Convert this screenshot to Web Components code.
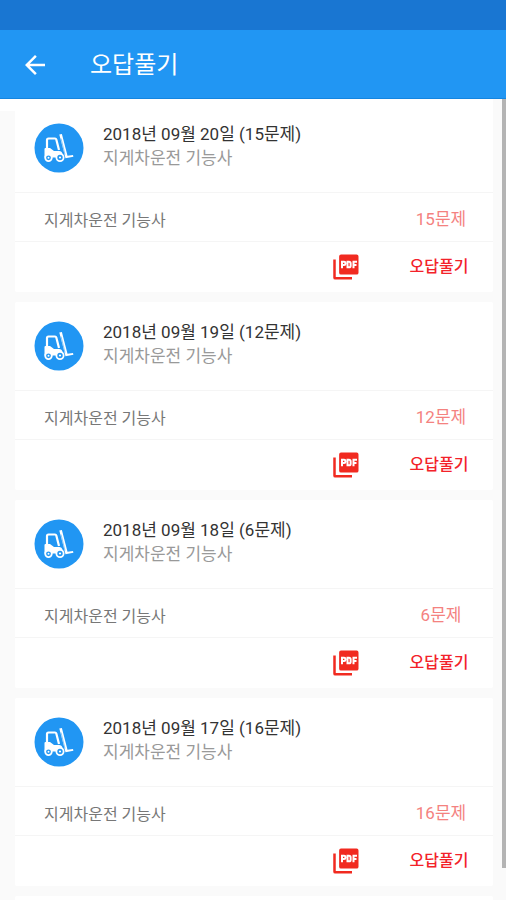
<!DOCTYPE html>
<html lang="ko">
<head>
<meta charset="utf-8">
<meta name="viewport" content="width=device-width, initial-scale=1">
<title>오답풀기</title>
<style>
html, body { height: 100%; margin: 0; }
body { font-family: Roboto, "Noto Sans CJK KR", sans-serif; background: #fafafa; overflow: hidden; }
</style>
</head>
<body>
<review-app></review-app>

<template id="app-tpl">
<style>
:host { display: flex; flex-direction: column; height: 100%; }
.list { flex: 1; min-height: 0; overflow: hidden; display: grid; grid-template-columns: 1fr 4px; }
main { display: flex; flex-direction: column; gap: 10px; padding: 5px 9px 0 15px; min-height: 0; overflow: hidden; background: linear-gradient(#fff, #fff) 0 0 / calc(100% - 9px) 12px no-repeat; }
.track { height: 100%; }
.thumb { height: 96%; background: #b4b4b4; }
</style>
<app-header>오답풀기</app-header>
<div class="list">
<main>
<review-card count="15"><span slot="date">2018년 09월 20일 (15문제)</span>지게차운전 기능사</review-card>
<review-card count="12"><span slot="date">2018년 09월 19일 (12문제)</span>지게차운전 기능사</review-card>
<review-card count="6"><span slot="date">2018년 09월 18일 (6문제)</span>지게차운전 기능사</review-card>
<review-card count="16"><span slot="date">2018년 09월 17일 (16문제)</span>지게차운전 기능사</review-card>
<blank-card></blank-card>
</main>
<div class="track"><div class="thumb"></div></div>
</div>
</template>

<template id="header-tpl">
<style>
:host { display: block; flex: none; color: #fff; }
.status { height: 30px; background: #1976d2; }
.bar { height: 69px; display: flex; align-items: center; gap: 40px; padding: 2px 0 0 20px; background: #2196f3; border-bottom: 1px solid #1485e0; box-sizing: border-box; }
button { display: flex; padding: 0; border: 0; background: none; color: inherit; }
h1 { margin: 0; font-size: 24px; line-height: 32px; font-weight: 400; }
</style>
<div class="status"></div>
<header class="bar">
<button type="button" aria-label="뒤로"><svg width="30" height="30" viewBox="0 0 24 24" fill="currentColor"><path d="M20 11H7.830l5.590-5.590L12 4l-8 8 8 8 1.410-1.410L7.830 13H20v-2z"/></svg></button>
<h1><slot></slot></h1>
</header>
</template>

<template id="card-tpl">
<style>
:host { display: block; flex: none; background: #fff; border-radius: 2px; }
.top { display: flex; align-items: center; gap: 19px; height: 88px; padding-left: 19px; }
.date { font-size: 17px; line-height: 24px; color: #333; }
.sub { font-size: 17px; line-height: 24px; color: #999; }
.text { padding-bottom: 4px; }
.row { display: flex; align-items: center; justify-content: space-between; height: 49px; padding: 0 12px 0 29px; border-top: 1px solid #f5f5f5; box-sizing: border-box; font-size: 16px; line-height: 24px; }
.name { color: #777; padding-top: 8px; }
.count { width: 80px; text-align: center; color: #f4827f; font-size: 17px; padding-top: 4px; }
.actions { justify-content: flex-end; gap: 38px; height: 51px; padding-right: 14px; }
button { display: flex; justify-content: center; padding: 0; border: 0; background: none; font: inherit; color: #f3222a; }
.solve { width: 80px; font-weight: 500; }
</style>
<div class="top">
<forklift-icon></forklift-icon>
<div class="text"><div class="date"><slot name="date"></slot></div><div class="sub"><slot></slot></div></div>
</div>
<div class="row"><span class="name">지게차운전 기능사</span><span class="count"></span></div>
<div class="row actions">
<button type="button" aria-label="PDF"><pdf-icon></pdf-icon></button>
<button type="button" class="solve">오답풀기</button>
</div>
</template>

<script>
const stamp = (el, html) => { el.attachShadow({ mode: 'open' }).innerHTML = html; };
const clone = (el, id) => el.attachShadow({ mode: 'open' }).append(document.getElementById(id).content.cloneNode(true));

customElements.define('forklift-icon', class extends HTMLElement {
  constructor() {
    super();
    stamp(this, `<style>:host { display: block; flex: none; } svg { display: block; }</style>
<svg width="50" height="50" viewBox="0 0 50 50" aria-hidden="true">
<circle cx="25" cy="25" r="24.5" fill="#2196f3"/>
<path d="M13 28V17q0-1.500 1.500-1.500H21q1 0 1.300 1L25 27" fill="none" stroke="#fff" stroke-width="2.200"/>
<path d="M10.500 26q0-1 1-1h4.500l4 3h5q3 0 3.500 3v3.500h-18z" fill="#fff"/>
<path d="M25.300 11.600l2.600-.6 5.600 21.800 5.500-.8.400 1.800-7.900 1.500z" fill="#fff"/>
<path d="M27 15.500l4 16" stroke="#2196f3" stroke-width=".5"/>
<g fill="#2196f3" stroke="#fff" stroke-width="1.800"><circle cx="14.500" cy="34.800" r="3.300"/><circle cx="26" cy="34.500" r="3.600"/></g>
<g fill="#fff"><circle cx="14.500" cy="34.800" r="1"/><circle cx="26" cy="34.500" r="1.100"/></g>
</svg>`);
  }
});

customElements.define('pdf-icon', class extends HTMLElement {
  constructor() {
    super();
    stamp(this, `<style>:host { display: block; } svg { display: block; }</style>
<svg width="30" height="30" viewBox="0 0 24 24" aria-hidden="true">
<path fill="#f12a20" d="M8 2h12.500q1.500 0 1.500 1.500V16.500q0 1.500-1.500 1.500H8q-1.500 0-1.500-1.500V3.500Q6.500 2 8 2zM1.800 6h2v14h13v2H3.300q-1.500 0-1.500-1.500z"/>
<path d="M8.800 13V7.800h1.700q1 0 1 1v.6q0 1-1 1H8.800M13.200 7.800v4.400h1.200q1.300 0 1.300-1.300V9.100q0-1.300-1.300-1.300zM18 13V7.800h2.800M18 10.300h2.400" fill="none" stroke="#fff" stroke-width="1.600"/>
</svg>`);
  }
});

customElements.define('blank-card', class extends HTMLElement {
  constructor() {
    super();
    stamp(this, `<style>:host { display: block; flex: none; height: 188px; background: #fff; border-radius: 2px; }</style>`);
  }
});

customElements.define('review-card', class extends HTMLElement {
  constructor() { super(); clone(this, 'card-tpl'); }
  connectedCallback() {
    this.shadowRoot.querySelector('.count').textContent = this.getAttribute('count') + '문제';
  }
});

customElements.define('app-header', class extends HTMLElement {
  constructor() { super(); clone(this, 'header-tpl'); }
});

customElements.define('review-app', class extends HTMLElement {
  constructor() { super(); clone(this, 'app-tpl'); }
});
</script>
</body>
</html>
